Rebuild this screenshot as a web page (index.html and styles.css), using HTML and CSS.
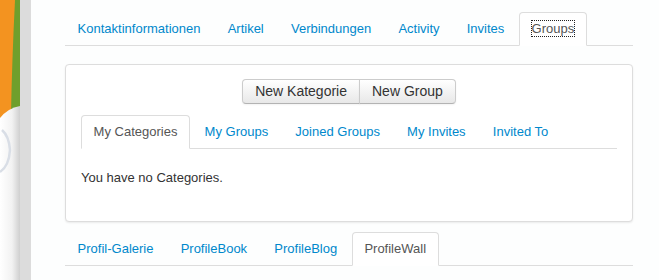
FILE: index.html
```html
<!DOCTYPE html>
<html>
<head>
<meta charset="utf-8">
<link rel="stylesheet" href="styles.css">
</head>
<body>
<div class="deco">
  <svg width="20" height="280" viewBox="0 0 20 280">
    <defs>
      <linearGradient id="fade" x1="0" y1="0" x2="1" y2="0">
        <stop offset="0" stop-color="#ffffff"/>
        <stop offset="0.6" stop-color="#f2f2f2"/>
        <stop offset="1" stop-color="#cfcfcf"/>
      </linearGradient>
    </defs>
    <rect x="0" y="0" width="20" height="130" fill="#f39320"/>
    <path d="M15,0 L20,0 L20,112 L11,114 Q12,60 15,0 Z" fill="#6f9f2c"/>
    <path d="M0,118 Q8,108 20,106 L20,280 L0,280 Z" fill="url(#fade)"/>
    <path d="M0,172 Q9,166 10,150 Q9,136 2,130" fill="none" stroke="#d9dee6" stroke-width="2.5"/>
  </svg>
</div>
<div class="strip"></div>
<div class="main">
  <ul class="tabs">
    <li><a href="#">Kontaktinformationen</a></li>
    <li><a href="#">Artikel</a></li>
    <li><a href="#">Verbindungen</a></li>
    <li><a href="#">Activity</a></li>
    <li><a href="#">Invites</a></li>
    <li class="active"><a href="#"><span class="focus">Groups</span></a></li>
  </ul>

  <div class="panel">
    <div class="btn-row">
      <div class="btn-group">
        <button class="btn first">New Kategorie</button>
        <button class="btn last">New Group</button>
      </div>
    </div>
    <ul class="tabs inner">
      <li class="active"><a href="#">My Categories</a></li>
      <li><a href="#">My Groups</a></li>
      <li><a href="#">Joined Groups</a></li>
      <li><a href="#">My Invites</a></li>
      <li><a href="#">Invited To</a></li>
    </ul>
    <p class="empty">You have no Categories.</p>
  </div>

  <ul class="tabs bottom">
    <li><a href="#">Profil-Galerie</a></li>
    <li><a href="#">ProfileBook</a></li>
    <li><a href="#">ProfileBlog</a></li>
    <li class="active"><a href="#">ProfileWall</a></li>
  </ul>
</div>
</body>
</html>
```

FILE: styles.css
```css
html, body {
  margin: 0;
  padding: 0;
  height: 100%;
}
body {
  display: flex;
  font-family: "Liberation Sans", Arial, sans-serif;
  font-size: 13px;
  color: #333;
  background: #fdfefe;
  overflow: hidden;
}
.deco {
  width: 20px;
  flex: none;
  line-height: 0;
}
.strip {
  width: 11px;
  flex: none;
  background: #dcdcdc;
}
.main {
  flex: 1;
  padding: 12px 26px 0 34px;
  min-width: 0;
}
.tabs {
  list-style: none;
  margin: 0;
  padding: 0;
  display: flex;
  border-bottom: 1px solid #dddddd;
}
.tabs li {
  margin-bottom: -1px;
}
.tabs a {
  display: block;
  padding: 7px 11.6px;
  line-height: 18px;
  border: 1px solid transparent;
  border-radius: 4px 4px 0 0;
  margin-right: 2px;
  color: #0088cc;
  text-decoration: none;
  white-space: nowrap;
}
.tabs .active a {
  color: #555555;
  background: #ffffff;
  border-color: #dddddd #dddddd transparent;
}
.focus {
  outline: 1px dotted #222;
  outline-offset: 0;
}
.panel {
  margin-top: 18px;
  border: 1px solid #dddddd;
  border-radius: 4px;
  box-shadow: 0 1px 2px rgba(0, 0, 0, 0.08);
  padding: 14px 15px 14px;
  background: #ffffff;
}
.btn-row {
  display: flex;
  justify-content: center;
}
.btn-group {
  display: flex;
}
.btn {
  font-family: "Liberation Sans", Arial, sans-serif;
  font-size: 14px;
  line-height: 17px;
  padding: 3px 12px;
  color: #333;
  background: linear-gradient(#ffffff, #e8e8e8);
  border: 1px solid #cccccc;
  border-bottom-color: #b3b3b3;
  box-shadow: inset 0 1px 0 rgba(255,255,255,0.2), 0 1px 2px rgba(0,0,0,0.05);
  margin: 0;
  cursor: pointer;
}
.btn.first {
  border-radius: 4px 0 0 4px;
}
.btn.last {
  border-radius: 0 4px 4px 0;
  margin-left: -1px;
}
.inner {
  margin-top: 11px;
}
.empty {
  margin: 20px 0 20px;
  line-height: 18px;
}
.bottom {
  margin-top: 10px;
}
```
